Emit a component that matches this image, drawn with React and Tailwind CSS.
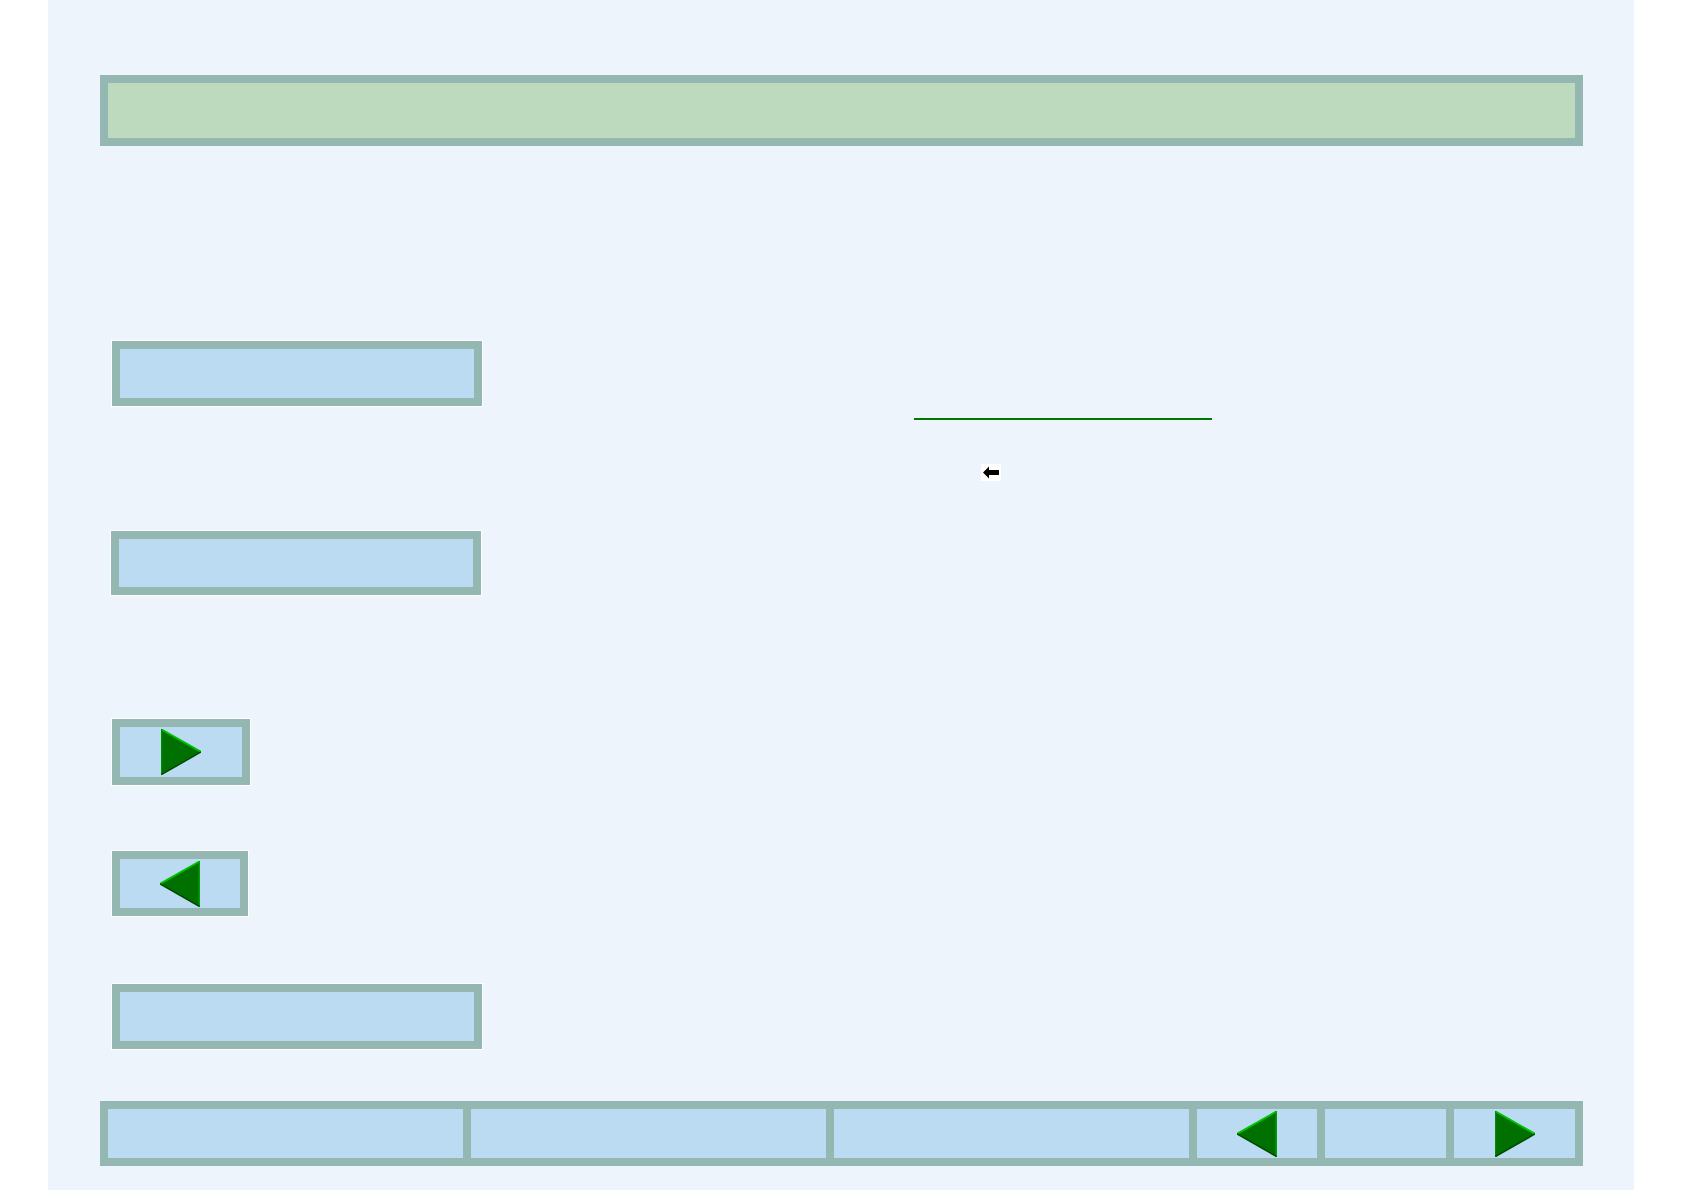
import React from 'react';

const BORDER = 'border-8 border-[#94b8b1]';

function Tri({ dir = 'right' }) {
  // bevelled green triangle, 40x46
  if (dir === 'right') {
    return (
      <svg width="40" height="46" viewBox="0 0 40 46">
        <polygon points="0,0 40,23 0,46" fill="#007000" />
        <line x1="0.5" y1="0.5" x2="40" y2="23" stroke="#00c000" strokeWidth="2" />
        <line x1="0.5" y1="0" x2="0.5" y2="46" stroke="#008a00" strokeWidth="1.5" />
        <line x1="0.5" y1="45.5" x2="40" y2="23" stroke="#004a00" strokeWidth="1.5" />
      </svg>
    );
  }
  return (
    <svg width="40" height="46" viewBox="0 0 40 46">
      <polygon points="40,0 0,23 40,46" fill="#007000" />
      <line x1="0" y1="23" x2="39.5" y2="0.5" stroke="#00c000" strokeWidth="2" />
      <line x1="39.3" y1="0" x2="39.3" y2="46" stroke="#00a000" strokeWidth="1.5" />
      <line x1="0" y1="23" x2="39.5" y2="45.5" stroke="#004a00" strokeWidth="1.5" />
    </svg>
  );
}

function NavBox({ className = '', children }) {
  return (
    <div className={`border border-white ${className}`}>
      <div className={`${BORDER} bg-[#bbdbf3] h-full flex items-center justify-center`}>
        {children}
      </div>
    </div>
  );
}

function Cell({ className = '', children }) {
  return (
    <div className={`bg-[#bbdbf3] h-full flex items-center justify-center ${className}`}>
      {children}
    </div>
  );
}

export default function App() {
  return (
    <div className="w-full min-h-screen bg-white flex">
      <div className="ml-[48px] w-[1586px] h-[1190px] bg-[#edf4fb] flex flex-col">
        {/* title bar */}
        <div className={`ml-[52px] mt-[75px] w-[1483px] h-[71px] ${BORDER} bg-[#bedabe]`} />

        {/* body */}
        <div className="flex">
          <div className="ml-[63px] w-[372px] flex flex-col">
            <NavBox className="mt-[194px] w-[372px] h-[67px]" />
            <NavBox className="mt-[123px] -ml-px w-[372px] h-[66px]" />
            <NavBox className="mt-[122px] w-[140px] h-[68px]">
              <Tri dir="right" />
            </NavBox>
            <NavBox className="mt-[64px] w-[138px] h-[67px]">
              <Tri dir="left" />
            </NavBox>
            <NavBox className="mt-[66px] w-[372px] h-[67px]" />
          </div>

          <div className="ml-[431px] flex flex-col">
            <div className="mt-[272px] w-[298px] h-[2px] bg-[#007700]" />
            <div className="mt-[44px] ml-[67px] w-[20px] h-[17px] bg-white">
              <svg width="20" height="17" viewBox="0 0 20 17">
                <polygon points="2,8.5 8,2.5 8,6 18,6 18,11 8,11 8,14.5" fill="#000" />
              </svg>
            </div>
          </div>
        </div>

        {/* bottom navigation */}
        <div className={`ml-[52px] mt-[51px] w-[1483px] h-[65px] ${BORDER} bg-[#94b8b1] flex gap-[8px]`}>
          <Cell className="w-[355px]" />
          <Cell className="w-[355px]" />
          <Cell className="w-[355px]" />
          <Cell className="w-[120px]">
            <Tri dir="left" />
          </Cell>
          <Cell className="w-[121px]" />
          <Cell className="w-[121px]">
            <Tri dir="right" />
          </Cell>
        </div>
      </div>
    </div>
  );
}
